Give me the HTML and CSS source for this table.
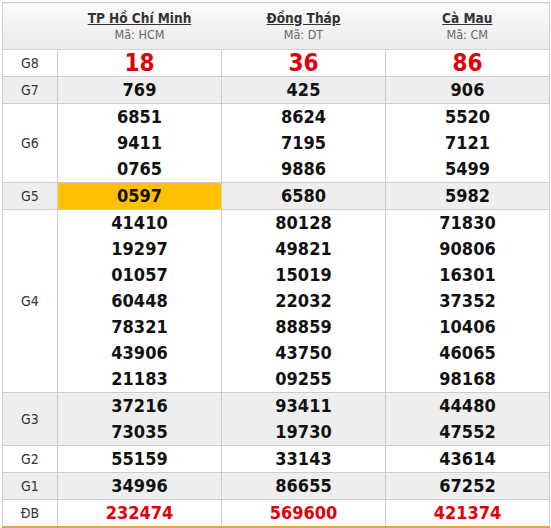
FILE: index.html
```html
<!DOCTYPE html>
<html lang="vi">
<head>
<meta charset="utf-8">
<title>Kết quả xổ số</title>
<link rel="stylesheet" href="styles.css">
</head>
<body>
<table class="kq">
  <colgroup>
    <col class="c-label"><col class="c-prov"><col class="c-prov"><col class="c-prov">
  </colgroup>
  <thead>
    <tr>
      <th></th>
      <th><a class="prov" href="#">TP Hồ Chí Minh</a><div class="code">Mã: HCM</div></th>
      <th><a class="prov" href="#">Đồng Tháp</a><div class="code">Mã: DT</div></th>
      <th><a class="prov" href="#">Cà Mau</a><div class="code">Mã: CM</div></th>
    </tr>
  </thead>
  <tbody>
    <tr class="g8">
      <td class="lbl">G8</td>
      <td><div class="n big">18</div></td>
      <td><div class="n big">36</div></td>
      <td><div class="n big">86</div></td>
    </tr>
    <tr class="alt">
      <td class="lbl">G7</td>
      <td><div class="n">769</div></td>
      <td><div class="n">425</div></td>
      <td><div class="n">906</div></td>
    </tr>
    <tr>
      <td class="lbl">G6</td>
      <td><div class="n">6851</div><div class="n">9411</div><div class="n">0765</div></td>
      <td><div class="n">8624</div><div class="n">7195</div><div class="n">9886</div></td>
      <td><div class="n">5520</div><div class="n">7121</div><div class="n">5499</div></td>
    </tr>
    <tr class="alt">
      <td class="lbl">G5</td>
      <td class="hl"><div class="n">0597</div></td>
      <td><div class="n">6580</div></td>
      <td><div class="n">5982</div></td>
    </tr>
    <tr>
      <td class="lbl">G4</td>
      <td><div class="n">41410</div><div class="n">19297</div><div class="n">01057</div><div class="n">60448</div><div class="n">78321</div><div class="n">43906</div><div class="n">21183</div></td>
      <td><div class="n">80128</div><div class="n">49821</div><div class="n">15019</div><div class="n">22032</div><div class="n">88859</div><div class="n">43750</div><div class="n">09255</div></td>
      <td><div class="n">71830</div><div class="n">90806</div><div class="n">16301</div><div class="n">37352</div><div class="n">10406</div><div class="n">46065</div><div class="n">98168</div></td>
    </tr>
    <tr class="alt">
      <td class="lbl">G3</td>
      <td><div class="n">37216</div><div class="n">73035</div></td>
      <td><div class="n">93411</div><div class="n">19730</div></td>
      <td><div class="n">44480</div><div class="n">47552</div></td>
    </tr>
    <tr>
      <td class="lbl">G2</td>
      <td><div class="n">55159</div></td>
      <td><div class="n">33143</div></td>
      <td><div class="n">43614</div></td>
    </tr>
    <tr class="alt">
      <td class="lbl">G1</td>
      <td><div class="n">34996</div></td>
      <td><div class="n">86655</div></td>
      <td><div class="n">67252</div></td>
    </tr>
    <tr class="db">
      <td class="lbl">ĐB</td>
      <td><div class="n red">232474</div></td>
      <td><div class="n red">569600</div></td>
      <td><div class="n red">421374</div></td>
    </tr>
  </tbody>
</table>
</body>
</html>
```

FILE: styles.css
```css
html, body {
  margin: 0;
  padding: 0;
  background: #ffffff;
}
body {
  padding: 2px 0 0 2px;
  font-family: "DejaVu Sans Condensed", "DejaVu Sans", sans-serif;
  font-stretch: condensed;
  color: #222;
}
.kq {
  border-collapse: collapse;
  width: 546px;
  table-layout: fixed;
  border: 1px solid #cccccc;
  border-bottom: 3px solid #f3a23a;
}
.c-label { width: 55px; }
.c-prov { width: 164px; }
.kq th {
  background: linear-gradient(#fafafa, #ebebeb);
  height: 46px;
  padding: 0;
  vertical-align: middle;
  font-weight: normal;
  text-align: center;
  border-bottom: 1px solid #d4d4d4;
}
.prov {
  font-size: 13.5px;
  font-weight: bold;
  color: #333;
  text-decoration: underline;
  line-height: 16px;
  display: block;
}
.code {
  font-size: 12.5px;
  color: #666;
  line-height: 16px;
  margin-top: 1px;
}
.kq td {
  border: 1px solid #cccccc;
  padding: 0;
  text-align: center;
  vertical-align: middle;
}
.kq .lbl {
  font-size: 14px;
  color: #333;
}
.alt td {
  background: #eeeeee;
}
.alt td.hl {
  background: #ffc000;
}
.n {
  font-size: 18px;
  font-weight: bold;
  line-height: 26px;
  color: #111;
}
.n.big {
  font-size: 24px;
  color: #e0000b;
}
.n.red {
  color: #e0000b;
}
```
